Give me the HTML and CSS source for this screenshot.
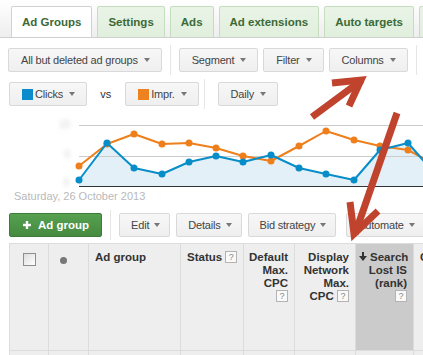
FILE: index.html
```html
<!DOCTYPE html>
<html>
<head>
<meta charset="utf-8">
<link rel="stylesheet" href="styles.css">
</head>
<body>
<div class="page">
  <div class="tabs">
    <div class="tab active">Ad Groups</div>
    <div class="tab">Settings</div>
    <div class="tab">Ads</div>
    <div class="tab">Ad extensions</div>
    <div class="tab">Auto targets</div>
    <div class="tab">Dimensions</div>
  </div>

  <div class="toolbar t1">
    <button class="btn">All but deleted ad groups<span class="caret"></span></button>
    <span class="sep"></span>
    <button class="btn">Segment<span class="caret"></span></button>
    <button class="btn ml5">Filter<span class="caret"></span></button>
    <button class="btn ml5">Columns<span class="caret"></span></button>
    <span class="sep"></span>
  </div>

  <div class="toolbar t2">
    <button class="btn"><span class="swatch blue"></span>Clicks<span class="caret"></span></button>
    <span class="vs">vs</span>
    <button class="btn"><span class="swatch orange"></span>Impr.<span class="caret"></span></button>
    <span class="sep sep2"></span>
    <button class="btn">Daily<span class="caret"></span></button>
  </div>

  <svg class="chart" width="423" height="80" viewBox="0 110 423 80">
    <defs>
      <filter id="soft" x="-50%" y="-50%" width="200%" height="200%"><feGaussianBlur stdDeviation="2"/></filter>
    </defs>
    <g class="ylabels" filter="url(#soft)">
      <text x="70" y="128" text-anchor="end">10</text>
      <text x="70" y="158" text-anchor="end">5</text>
      <text x="69" y="186" text-anchor="end">0</text>
    </g>
    <polygon class="area" points="79,186 79,180 107,143 134,168 162,174 189,162 216,156 243,162 271,155 299,168 326,174 354,180 380,150 408,143 436,175 436,186"/>
    <line class="grid" x1="79" y1="125.5" x2="423" y2="125.5"/>
    <line class="grid" x1="79" y1="156.5" x2="423" y2="156.5"/>
    <line class="base" x1="79" y1="186.5" x2="423" y2="186.5"/>
    <polyline class="line orange-l" points="79,166 107,144 134,134 162,144 189,143 216,148 243,156 271,161 299,146 326,131 354,140 380,146 408,150 436,165"/>
    <g class="dots orange-d">
      <circle cx="79" cy="166" r="3.5"/><circle cx="107" cy="144" r="3.5"/><circle cx="134" cy="134" r="3.5"/><circle cx="162" cy="144" r="3.5"/><circle cx="189" cy="143" r="3.5"/><circle cx="216" cy="148" r="3.5"/><circle cx="243" cy="156" r="3.5"/><circle cx="271" cy="161" r="3.5"/><circle cx="299" cy="146" r="3.5"/><circle cx="326" cy="131" r="3.5"/><circle cx="354" cy="140" r="3.5"/><circle cx="380" cy="146" r="3.5"/><circle cx="408" cy="150" r="3.5"/>
    </g>
    <polyline class="line blue-l" points="79,180 107,143 134,168 162,174 189,162 216,156 243,162 271,155 299,168 326,174 354,180 380,150 408,143 436,175"/>
    <g class="dots blue-d">
      <circle cx="79" cy="180" r="3.5"/><circle cx="107" cy="143" r="3.5"/><circle cx="134" cy="168" r="3.5"/><circle cx="162" cy="174" r="3.5"/><circle cx="189" cy="162" r="3.5"/><circle cx="216" cy="156" r="3.5"/><circle cx="243" cy="162" r="3.5"/><circle cx="271" cy="155" r="3.5"/><circle cx="299" cy="168" r="3.5"/><circle cx="326" cy="174" r="3.5"/><circle cx="354" cy="180" r="3.5"/><circle cx="380" cy="150" r="3.5"/><circle cx="408" cy="143" r="3.5"/>
    </g>
  </svg>
  <div class="date">Saturday, 26 October 2013</div>

  <div class="toolbar t3">
    <button class="btn primary"><svg class="plus" width="8" height="8" viewBox="0 0 8 8"><rect x="2.8" y="0" width="2.4" height="8"/><rect x="0" y="2.8" width="8" height="2.4"/></svg>Ad group</button>
    <span class="sep"></span>
    <button class="btn">Edit<span class="caret"></span></button>
    <button class="btn ml6">Details<span class="caret"></span></button>
    <button class="btn ml6">Bid strategy<span class="caret"></span></button>
    <button class="btn ml10">Automate<span class="caret"></span></button>
  </div>

  <div class="table">
    <div class="hc cb"><span class="checkbox"></span></div>
    <div class="hc dotc"><span class="dot"></span></div>
    <div class="hc">Ad group</div>
    <div class="hc nowrap">Status <span class="help">?</span></div>
    <div class="hc num">Default<br>Max.<br>CPC<br><span class="help">?</span></div>
    <div class="hc num">Display<br>Network<br>Max.<br>CPC <span class="help">?</span></div>
    <div class="hc num sorted"><svg class="sortarrow" width="8" height="9" viewBox="0 0 8 9"><rect x="3" y="0" width="2" height="5"/><polygon points="0,4 8,4 4,9"/></svg>Search<br>Lost IS<br>(rank)<br><span class="help">?</span></div>
    <div class="hc">Conv.</div>
    <div class="rc"></div><div class="rc"></div><div class="rc"></div><div class="rc"></div><div class="rc"></div><div class="rc"></div><div class="rc"></div><div class="rc"></div>
  </div>

  <svg class="arrows" width="423" height="355" viewBox="0 0 423 355">
    <g fill="none" stroke="#c0442d" stroke-width="7" stroke-miterlimit="6">
      <line x1="312" y1="117" x2="362" y2="80"/>
      <polyline points="332,83 361,80 349,106"/>
      <line x1="397" y1="113" x2="355" y2="234"/>
      <polyline points="350,202 354,234 378,211"/>
    </g>
  </svg>
</div>
</body>
</html>
```

FILE: styles.css
```css
* { box-sizing: border-box; }
html, body { margin: 0; padding: 0; }
body {
  width: 423px;
  height: 355px;
  overflow: hidden;
  background: #fff;
  font-family: "Liberation Sans", Arial, sans-serif;
  font-size: 11px;
  color: #444;
}
.page { position: relative; width: 423px; height: 355px; overflow: hidden; }

/* tabs */
.tabs {
  display: flex;
  align-items: flex-end;
  gap: 5px;
  height: 38px;
  padding: 6px 0 0 11px;
  border-bottom: 1px solid #cfcfcf;
  background: linear-gradient(#ffffff, #eeeeee);
  white-space: nowrap;
  overflow: hidden;
}
.tab {
  flex-shrink: 0;
  display: flex;
  align-items: center;
  height: 32px;
  margin-bottom: -1px;
  padding: 0 10px;
  border: 1px solid #c4ddbf;
  border-radius: 2px 2px 0 0;
  background: linear-gradient(#e9f4e6, #e1efdd);
  color: #3b6a37;
  font-weight: bold;
  font-size: 11.5px;
}
.tab.active {
  background: #fff;
  border-color: #d2d2d2;
  border-bottom-color: #fff;
}

/* toolbars */
.toolbar {
  display: flex;
  align-items: center;
  height: 24px;
  white-space: nowrap;
}
.t1 { margin-top: 10px; padding-left: 8px; }
.t2 { margin-top: 10px; padding-left: 9px; }
.t3 { margin-top: 11px; padding-left: 9px; }

.btn {
  flex-shrink: 0;
  display: flex;
  align-items: center;
  height: 24px;
  margin: 0;
  padding: 0 11px 0 12px;
  border: 1px solid #d9d9d9;
  border-radius: 2px;
  background: linear-gradient(#f7f7f7, #efefef);
  color: #444;
  font-family: "Liberation Sans", Arial, sans-serif;
  font-size: 11px;
  letter-spacing: -0.2px;
  white-space: nowrap;
}
.t3 .btn { padding: 0 9px 0 11px; }
.t3 .btn .caret { margin-left: 5px; }
.ml5 { margin-left: 5px; }
.ml6 { margin-left: 6px; }
.ml10 { margin-left: 10px; }

.caret {
  width: 0;
  height: 0;
  margin-left: 6px;
  border-left: 3.5px solid transparent;
  border-right: 3.5px solid transparent;
  border-top: 4px solid #777;
}
.sep {
  flex-shrink: 0;
  width: 1px;
  height: 30px;
  margin: -3px 8px;
  background: #e6e6e6;
}
.sep2 { margin: -3px 13px -3px 5px; }

.swatch { width: 11px; height: 11px; margin-right: 2px; }
.swatch.blue { background: #0d8ccb; }
.swatch.orange { background: #ef8220; }
.vs { margin: 0 14px 0 13px; color: #333; font-size: 11px; }

.t3 .primary {
  padding: 0 12px 0 13px;
  border-color: #3e7b39;
  background: linear-gradient(#56a050, #458a40);
  color: #fff;
  font-weight: bold;
  font-size: 11.5px;
  letter-spacing: 0;
}
.plus { margin-right: 7px; fill: #fff; }

/* chart */
.chart { display: block; margin-top: 4px; }
.ylabels text { font-family: "Liberation Sans", Arial, sans-serif; font-size: 10px; fill: #d2d2d2; }
.area { fill: #e3f0f7; }
.grid { stroke: #cccccc; stroke-width: 1; }
.base { stroke: #333333; stroke-width: 1; }
.line { fill: none; stroke-width: 2; stroke-linejoin: round; }
.orange-l { stroke: #ee7f1b; }
.blue-l { stroke: #078dc8; }
.orange-d { fill: #ee7f1b; }
.blue-d { fill: #078dc8; }

.date {
  height: 12px;
  padding-left: 14px;
  color: #b9b9b9;
  font-size: 11px;
  line-height: 12px;
}

/* table */
.table {
  display: grid;
  grid-template-columns: 39px 40px 92px 63px 51px 61px 58px 1fr;
  margin: 6px 0 0 9px;
  border-top: 1px solid #dcdcdc;
  background: #eeeeee;
}
.hc {
  height: 107px;
  padding: 7px 6px 0;
  border-left: 1px solid #dcdcdc;
  border-bottom: 1px solid #dcdcdc;
  color: #333;
  font-weight: bold;
  font-size: 11.5px;
  line-height: 13px;
  white-space: nowrap;
  overflow: hidden;
}
.hc.num { padding-left: 3px; text-align: right; }
.hc.sorted { background: #cbcbcb; }
.hc.cb { padding: 9px 0 0 13px; }
.hc.dotc { padding: 13px 0 0 11px; }
.rc { height: 10px; border-left: 1px solid #dcdcdc; }

.checkbox {
  display: block;
  width: 13px;
  height: 13px;
  border: 1px solid #8e8e8e;
  background: linear-gradient(135deg, #dcdcdc, #ffffff);
}
.dot {
  display: block;
  width: 7px;
  height: 7px;
  border-radius: 50%;
  background: #777;
}
.help {
  display: inline-block;
  width: 12px;
  height: 12px;
  border: 1px solid #b3b3b3;
  background: #f9f9f9;
  color: #888;
  font-weight: normal;
  font-size: 9px;
  line-height: 10px;
  text-align: center;
  vertical-align: top;
}
.sortarrow { margin-right: 3px; fill: #333; vertical-align: 0; }

/* overlay annotation arrows */
.arrows {
  position: absolute;
  top: 0;
  left: 0;
  pointer-events: none;
}
```
